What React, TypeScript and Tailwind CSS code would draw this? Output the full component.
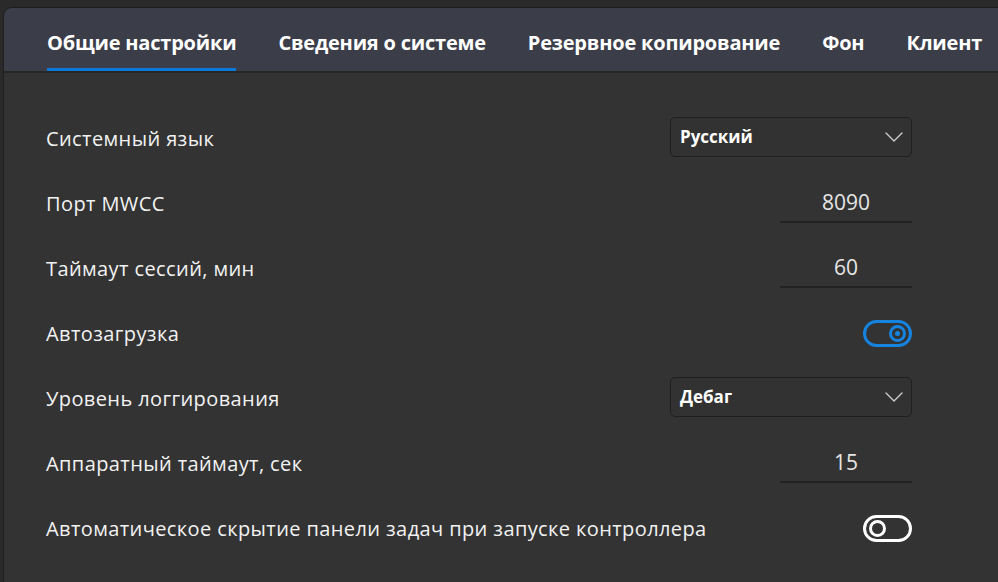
const TABS = ['Общие настройки', 'Сведения о системе', 'Резервное копирование', 'Фон', 'Клиент']

type Row =
  | { label: string; kind: 'select'; value: string }
  | { label: string; kind: 'input'; value: string }
  | { label: string; kind: 'toggle'; on: boolean }

const ROWS: Row[] = [
  { label: 'Системный язык', kind: 'select', value: 'Русский' },
  { label: 'Порт MWCC', kind: 'input', value: '8090' },
  { label: 'Таймаут сессий, мин', kind: 'input', value: '60' },
  { label: 'Автозагрузка', kind: 'toggle', on: true },
  { label: 'Уровень логгирования', kind: 'select', value: 'Дебаг' },
  { label: 'Аппаратный таймаут, сек', kind: 'input', value: '15' },
  { label: 'Автоматическое скрытие панели задач при запуске контроллера', kind: 'toggle', on: false },
]

function Toggle({ on }: { on: boolean }) {
  if (on) {
    return (
      <div className="w-[49px] h-[27px] rounded-full border-[3px] border-[#1583e0] flex items-center justify-end pr-[3px]">
        <div className="w-[17px] h-[17px] rounded-full border-[3px] border-[#1583e0] flex items-center justify-center">
          <div className="w-[5px] h-[5px] rounded-full bg-[#1583e0]" />
        </div>
      </div>
    )
  }
  return (
    <div className="w-[49px] h-[27px] rounded-full border-[3px] border-white flex items-center pl-[3px]">
      <div className="w-[17px] h-[17px] rounded-full border-[3px] border-white" />
    </div>
  )
}

function Chevron() {
  return (
    <svg width="18" height="10" viewBox="0 0 18 10" fill="none" className="text-[#d0d0d0]">
      <path d="M1 1 L9 9 L17 1" stroke="currentColor" strokeWidth="1.3" strokeLinecap="round" strokeLinejoin="round" />
    </svg>
  )
}

function Control({ row }: { row: Row }) {
  if (row.kind === 'select') {
    return (
      <div className="w-[242px] h-[40px] mb-[4px] rounded-[5px] border border-[#1f1f1f] bg-[#323232] flex items-center justify-between pl-[9px] pr-[8px]">
        <span className="font-bold text-[17px] text-white">{row.value}</span>
        <Chevron />
      </div>
    )
  }
  if (row.kind === 'input') {
    return (
      <div className="w-[132px] h-[38px] border-b-2 border-[#222] flex items-center justify-center">
        <span className="text-[21px] text-[#e6e6e6]">{row.value}</span>
      </div>
    )
  }
  return <Toggle on={row.on} />
}

export default function App() {
  return (
    <div className="w-[998px] h-[582px] overflow-hidden bg-[#2a2a2a] pt-[7px] pl-[3px]" style={{ fontFamily: '"Open Sans", "Noto Sans", sans-serif' }}>
      <div className="h-full rounded-tl-[9px] overflow-hidden border-l border-t border-[#1e1e1e] bg-[#333333]">
        {/* tabs */}
        <div className="h-[65px] bg-[#3b3d48] border-b-2 border-[#272727] flex items-stretch gap-[42px] pl-[43px]">
          {TABS.map((t, i) => (
            <div key={t} className="relative flex items-center pt-[6px]">
              <span className="font-bold text-[20px] text-white whitespace-nowrap tracking-[-0.2px]">{t}</span>
              {i === 0 && <div className="absolute left-0 right-0 bottom-0 h-[3px] bg-[#0a78d7]" />}
            </div>
          ))}
        </div>

        {/* settings */}
        <div className="pt-[33px] pl-[42px] pr-[86px]">
          {ROWS.map(r => (
            <div key={r.label} className="h-[65px] flex items-center justify-between">
              <span className="text-[20px] text-[#f2f2f2] whitespace-nowrap tracking-[0.4px]">{r.label}</span>
              <Control row={r} />
            </div>
          ))}
        </div>
      </div>
    </div>
  )
}
